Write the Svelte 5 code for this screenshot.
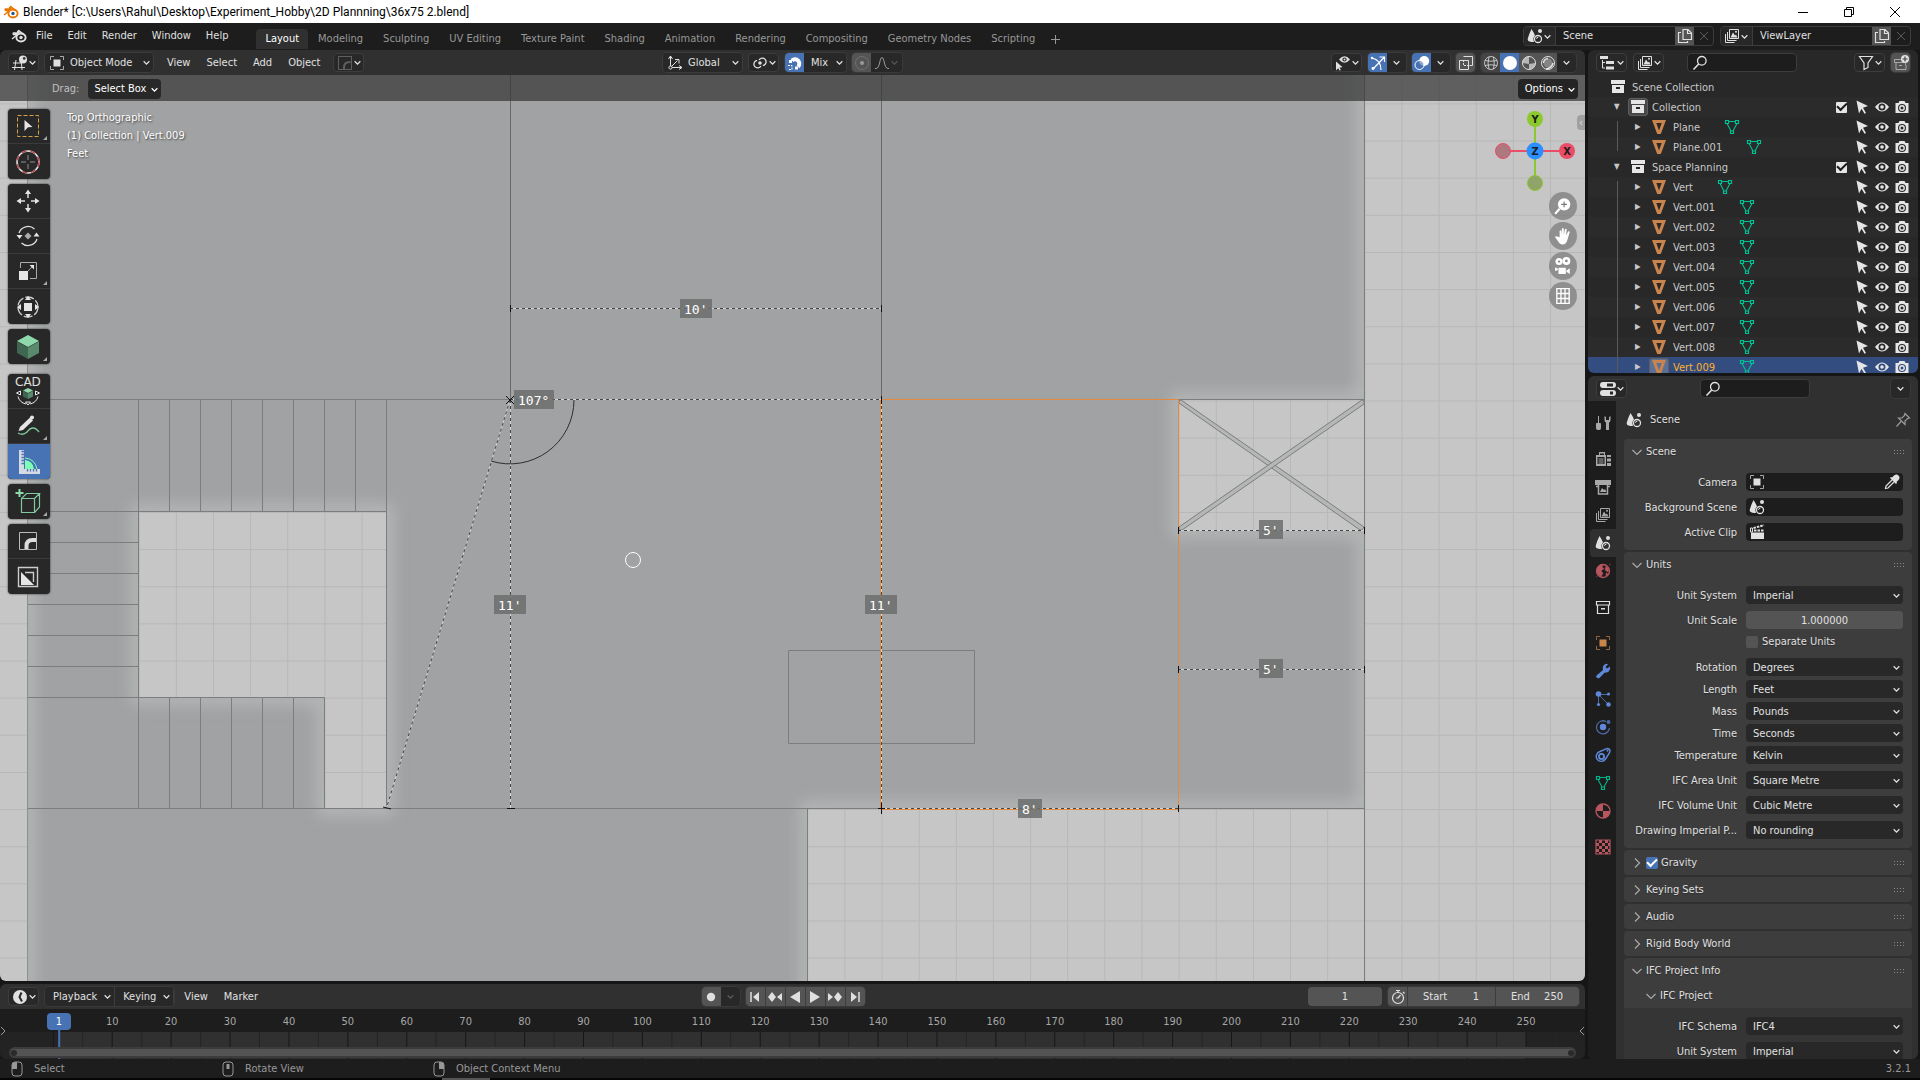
<script>
	const FOOT = 37.14;

	const icons = {
		blender:
			'<path d="M1 11 6.500 6.500H2.300V5H8L6.600 3.800 7.700 2.600 13 6.800" fill="none" stroke="currentColor" stroke-width="1.500" stroke-linejoin="round"/><ellipse cx="10" cy="9.500" rx="4.600" ry="4" fill="none" stroke="currentColor" stroke-width="1.900"/><circle cx="10" cy="9.500" r="1.700" fill="var(--eye, currentColor)"/>',
		chevron: '<path d="m4.500 6.500 3.500 3.500 3.500-3.500" fill="none" stroke="currentColor" stroke-width="1.600"/>',
		right: '<path d="m6 3.500 4.500 4.500-4.500 4.500" fill="none" stroke="currentColor" stroke-width="1.200"/>',
		down: '<path d="m3.500 6 4.500 4.500 4.500-4.500" fill="none" stroke="currentColor" stroke-width="1.200"/>',
		x: '<path d="m4 4 8 8m0-8-8 8" stroke="currentColor"/>',
		grid3d:
			'<path d="M1 8h8M0 12.500h13M4 5 2.500 15M9.500 8 10 15" stroke="currentColor" fill="none"/><circle cx="11" cy="4.500" r="4" fill="currentColor"/><circle cx="12.200" cy="3.400" r="1.300" fill="#333"/>',
		object:
			'<rect x="4.500" y="4.500" width="7" height="7" fill="currentColor"/><path d="M1.500 5V1.500H5M11 1.500h3.500V5M14.500 11v3.500H11M5 14.500H1.500V11" fill="none" stroke="currentColor" opacity=".7"/>',
		corner: '<path d="M1.500 1.500h13v13h-13z" fill="none" stroke="currentColor" opacity=".3"/><path d="M7 14V12q0-5 6.500-5" fill="none" stroke="currentColor" stroke-width="2" opacity=".3"/>',
		axes: '<path d="M3.500 1v11.500H15M3.500 12.500l7-7M1.500 4l2-3 2 3M12 10.500l3 2-3 2M8 4.500h4v4" fill="none" stroke="currentColor"/><circle cx="3.500" cy="12.500" r="1.600" fill="#282828" stroke="currentColor"/>',
		pivot:
			'<path d="M9 11A3.800 3.800 0 1 1 4.200 5.600h1M7 5a3.800 3.800 0 1 1 4.800 5.400h-1" fill="none" stroke="currentColor" stroke-width="1.300"/><circle cx="8" cy="8" r="1.800" fill="currentColor"/>',
		magnet:
			'<path d="M5 5.500a4.200 4.200 0 1 1 6 6.200" fill="none" stroke="currentColor" stroke-width="4"/><path d="M2 5h3v3H2zM8 11.500h3v3H8z" fill="currentColor"/><path d="M1 10.500h4v4H1" fill="none" stroke="currentColor" stroke-dasharray="2 1"/>',
		prop: '<circle cx="8" cy="8" r="6.500" fill="none" stroke="currentColor" opacity=".4"/><circle cx="8" cy="8" r="2" fill="currentColor"/>',
		falloff: '<path d="M1 13.500h1C6 13.500 5.500 2.500 8 2.500s2 11 6 11h1" fill="none" stroke="currentColor"/>',
		visibility:
			'<path d="M1 6.500v9l2.200-2.200 1.600 2.500 1-.7-1.200-2.500 3-.4z" fill="currentColor"/><path d="M4 4.500Q9.500-2 15 4.500 9.500 11 4 4.500z" fill="currentColor"/><circle cx="9.500" cy="4.500" r="2.100" fill="#282828"/><circle cx="9.500" cy="4.500" r="1" fill="currentColor"/>',
		gizmo: '<path d="M2 3q9 2 9 12M3.500 13.500 14 2.500M9.500 2H14.500V7" fill="none" stroke="currentColor" stroke-width="1.200"/><circle cx="3" cy="13.500" r="1.400" fill="currentColor"/><circle cx="2" cy="3" r="1.200" fill="currentColor"/>',
		overlay:
			'<circle cx="10.200" cy="6" r="5" fill="currentColor"/><circle cx="5.500" cy="10" r="4.500" fill="#4772b3" fill-opacity=".6" stroke="currentColor"/>',
		xray: '<path d="M5.500 1.500h9v9h-3M1.500 5.500h9v9h-9z" fill="none" stroke="currentColor"/><path d="M5.500 5v5.500H11" fill="none" stroke="currentColor" stroke-dasharray="2 1"/>',
		wire: '<circle cx="8" cy="8" r="6.500" fill="none" stroke="currentColor" opacity=".8"/><path d="M2 5.500q6 1.500 12 0M2 10.500q6-1.500 12 0M6 2q-2 6 0 12M10.500 2q1.500 6 0 12" fill="none" stroke="currentColor" opacity=".8"/>',
		solid: '<circle cx="8" cy="8" r="7" fill="currentColor"/>',
		matprev:
			'<circle cx="8" cy="8" r="6.500" fill="none" stroke="currentColor"/><path d="M8 1.500a6.500 6.500 0 0 0-6.500 6.500L8 9V1.500zM8 9l6.500-1A6.500 6.500 0 0 1 8 14.500z" fill="currentColor" opacity=".7"/>',
		rendered:
			'<circle cx="8" cy="8" r="6.500" fill="none" stroke="currentColor"/><circle cx="8" cy="8" r="4.600" fill="currentColor" opacity=".35"/><path d="M3.500 8a4.500 4.500 0 0 1 4.500-4.500M6 14q6-1 7-6" fill="none" stroke="currentColor" stroke-width="1.500"/>',
		search: '<circle cx="9.800" cy="5.800" r="4.300" fill="none" stroke="currentColor" stroke-width="1.300"/><path d="M6.700 9 1.500 14.500" stroke="currentColor" stroke-width="1.600"/>',
		filter: '<path d="M1.500 1.500h13L10 8v4.500L6 14.500V8z" fill="none" stroke="currentColor" stroke-width="1.200"/>',
		newcol:
			'<path d="M8 4.500H1.500v3h11V10M3 8v6.500h10V10M6 10.500h3" fill="none" stroke="currentColor" opacity=".6"/><circle cx="12" cy="4" r="4" fill="currentColor"/><path d="M12 1.500v5M9.500 4h5" stroke="#444" stroke-width="1.200"/>',
		outliner:
			'<path d="M0 1h8v3H0zM6 6h8v3H6zM6 11.500h8v3H6z" fill="currentColor"/><path d="M2.500 5v8H5M2.500 7.500H5" fill="none" stroke="currentColor"/>',
		layers:
			'<path d="M5.500 1.500h9v9h-9zM3.500 4v8.500h9M1.500 6v8.500h9" fill="none" stroke="currentColor"/><path d="M6.500 9.500 9 4.500l2 3 1-1 1.500 3z" fill="currentColor"/><circle cx="12" cy="3.800" r="1" fill="currentColor"/>',
		scene: '<path d="M4.500 1Q9.500 8.500 8.500 12.500q-1.500 2-4 1.500Q0 13.500.8 10.500 2 6 4.500 1z" fill="currentColor"/><circle cx="11" cy="11" r="4.600" fill="var(--hole, #282828)"/><circle cx="11" cy="11" r="3.500" fill="none" stroke="currentColor" stroke-width="1.300"/><path d="M9.500 10.800q0-1.500 1.800-1.500" fill="none" stroke="currentColor"/><circle cx="13" cy="3" r="2" fill="currentColor"/>',
		copy: '<path d="M6 1.500h5l3.500 3.500v6.500H6zM10.500 1.500V5.500h4M4 4.500H1.500v10h9V13" fill="none" stroke="currentColor" stroke-width="1.200"/>',
		collection:
			'<path d="M1 1h14v4H1zM2 6h12v8H2z" fill="currentColor"/><path d="M6 8h4v2H6z" fill="#282828"/>',
		archive: '<path d="M1.500 2.500h13v3.500h-13zM2.500 6v8.500h11V6" fill="none" stroke="currentColor" stroke-width="1.200"/><path d="M6 9h4v1.500H6z" fill="currentColor"/>',
		meshobj:
			'<path fill-rule="evenodd" d="M1 1h14L9.800 15H6.200zM5.300 4 8 11.500 10.700 4z" fill="currentColor"/>',
		meshdata:
			'<path d="M4.500 2.500h7M3 4.500l4 7.500M13 4.500 9 12" stroke="currentColor" stroke-width="1.100" fill="none"/><path d="M1.500 1.500h3v3h-3zM11.500 1.500h3v3h-3zM6.500 12h3v2.500h-3z" fill="none" stroke="currentColor" stroke-width="1.200"/>',
		cursor: '<path d="m2.500 1.500 11.500 5.500L9 8.700 12 14l-1.500.8-3-5-2.500 4.700z" fill="currentColor"/>',
		eye: '<path fill-rule="evenodd" d="M1 8Q8-1 15 8 8 17 1 8zM8 4.500a3.500 3.500 0 1 0 0 7 3.500 3.500 0 0 0 0-7z" fill="currentColor"/><circle cx="8" cy="8" r="1.800" fill="currentColor"/>',
		camera:
			'<path fill-rule="evenodd" d="M1.500 4h3l1-2h5l1 2h3v10h-13zM8 5a4 4 0 1 0 0 8 4 4 0 0 0 0-8z" fill="currentColor"/><circle cx="8" cy="9" r="2.200" fill="none" stroke="currentColor" stroke-width="1.400"/>',
		tool: '<path d="M3.500 1v7M1.500 8.500h4v5a1 1 0 0 1-1 1h-2a1 1 0 0 1-1-1z" stroke="currentColor" fill="currentColor"/><path d="M9.500 1v4q0 2 1.500 2.500V15h3V7.500Q15.500 7 15.500 5V1L14 2v3h-3V2z" fill="currentColor"/>',
		render:
			'<path fill-rule="evenodd" d="M1 4h3V1h6v3h1v11H1zM5 2.500V4h4V2.500zM2.500 6v7h7V6zM12 4h4v2h-4zM12 7.500h4v3h-4zM12 12h4v3h-4z" fill="currentColor"/><path d="M3.500 8h5M3.500 10h5M3.500 12h5" stroke="currentColor"/>',
		output:
			'<path d="M0 1h16v5H0z" fill="currentColor"/><path d="M3.500 6v9h9V6M1 7.500h2M13 7.500h2" fill="none" stroke="currentColor" stroke-width="1.500"/><path d="M5 13l2-4 2 2 1-1 1.500 3z" fill="currentColor"/>',
		world: '<circle cx="8" cy="8" r="6.500" fill="none" stroke="currentColor" stroke-width="1.300"/><path d="M2 5q3-4 6-3.500L7 4l2 1.500L6 8l2 2-2 4Q1 11 2 5zM11 3l3 3-1 3-3-2zM11 10l2 1-2 2zM14 2l2-1M1 14l1.500-1" fill="currentColor" stroke="currentColor" stroke-width=".5"/>',
		wrench: '<path d="M1.500 12.500 8 7Q7 3 10 1.200q1.500-.7 3 0L10.500 4l1.500 1.500L15 3.500q.8 3-1.200 5-2 1.500-4 1L4.500 15q-2 .8-3-.5-.8-1 0-2z" fill="currentColor"/>',
		particles:
			'<path d="M3.500 3.500h10M3.500 3.500v10M3.500 3.500l10 10" stroke="currentColor" opacity=".7"/><circle cx="3.500" cy="3" r="2.800" fill="currentColor"/><circle cx="13.500" cy="3" r="1.600" fill="currentColor"/><circle cx="3.500" cy="13.500" r="1.600" fill="currentColor"/><circle cx="13.500" cy="13.500" r="2.300" fill="currentColor"/>',
		physics:
			'<path d="M11 2.500A6.500 6.500 0 1 0 14.500 9" fill="none" stroke="currentColor" stroke-width="1.300" opacity=".7"/><circle cx="8" cy="8" r="3.200" fill="currentColor"/><circle cx="13.500" cy="3" r="2" fill="currentColor" opacity=".7"/>',
		constraint:
			'<path d="M12 1.500q3 0 3 2.500 0 1-1 2.500L10.500 12A5 5 0 1 1 5 4.500L11 1.800z" fill="none" stroke="currentColor" stroke-width="1.400"/><circle cx="6.500" cy="9.500" r="2.600" fill="none" stroke="currentColor" stroke-width="1.800"/><circle cx="12.500" cy="3.800" r="1" fill="currentColor"/>',
		material:
			'<circle cx="8" cy="8" r="7" fill="none" stroke="currentColor" stroke-width="1.300"/><path d="M8 1a7 7 0 0 0-7 7h7zM8 8h7a7 7 0 0 1-7 7z" fill="currentColor"/>',
		texture:
			'<path d="M1 1h14v14H1z" fill="none" stroke="currentColor" stroke-width="1.200"/><path d="M4 1h3v3H4zM10 1h3v3h-3zM1 4h3v3H1zM7 4h3v3H7zM13 4h2v3h-2zM4 7h3v3H4zM10 7h3v3h-3zM1 10h3v3H1zM7 10h3v3H7zM13 10h2v3h-2zM4 13h3v2H4zM10 13h3v2h-3z" fill="currentColor"/>',
		pin: '<path d="M10 1.500 14.500 6l-2 .5-2.500 2.500v3.500L3.500 6H7L9.500 3.500zM6 9.500l-4.500 5" fill="none" stroke="currentColor" stroke-width="1.200"/>',
		picker:
			'<path d="M10 1.500q2.500-2 4.500 0t0 4.500l-2 2 .5 1-1 1L6 4l1-1 1 .5z" fill="currentColor"/><path d="m8 6-6 6-.5 2.500L4 14l6-6" fill="none" stroke="currentColor" stroke-width="1.200"/>',
		clip: '<path d="M2 8.500h13V15H2z" fill="currentColor"/><path d="M1.500 4v4h2V4z" fill="none" stroke="currentColor"/><path d="M5 6.500h10M4.500 4 15 1.200" stroke="currentColor" stroke-width="2" stroke-dasharray="2.500 1" fill="none"/>',
		props: '<path d="M3 1h10a2.500 2.500 0 0 1 0 6H3a2.500 2.500 0 0 1 0-6zM3 9h10a2.500 2.500 0 0 1 0 6H3a2.500 2.500 0 0 1 0-6z" fill="currentColor"/><path d="M7 2.500h6v3H7zM10 10.500h3v3h-3z" fill="#282828"/>',
		clock: '<circle cx="8" cy="8" r="7" fill="currentColor"/><path d="M9.500 3.500 7.500 8l2.500 4.500" fill="none" stroke="#282828" stroke-width="2"/>',
		stopwatch:
			'<circle cx="8" cy="9" r="5.500" fill="none" stroke="currentColor" stroke-width="1.200"/><path d="M6 1.500h4M8 1.500V4M8 9l2.500-3M13 3l1.500 1.500M8 9H6" stroke="currentColor" stroke-width="1.200"/>',
		record: '<circle cx="8" cy="8" r="4.200" fill="currentColor"/>',
		first: '<path d="M4 3v10" stroke="currentColor" stroke-width="1.500"/><path d="M12 3v10L6 8z" fill="currentColor"/>',
		prevkey: '<path d="m1 8 4-5 4 5-4 5z" fill="currentColor"/><path d="M15 4v8l-5-4z" fill="currentColor"/>',
		back: '<path d="M13 2v12L3 8z" fill="currentColor"/>',
		play: '<path d="M3 2v12l10-6z" fill="currentColor"/>',
		nextkey: '<path d="m7 8 4-5 4 5-4 5z" fill="currentColor"/><path d="M1 4v8l5-4z" fill="currentColor"/>',
		last: '<path d="M12 3v10" stroke="currentColor" stroke-width="1.500"/><path d="M4 3v10l6-5z" fill="currentColor"/>',
		mouseleft: '<rect x="3" y="1" width="10" height="14" rx="3" fill="none" stroke="currentColor"/><path d="M3 4q0-3 5-3v7H3z" fill="currentColor"/>',
		mousemid: '<rect x="3" y="1" width="10" height="14" rx="3" fill="none" stroke="currentColor"/><path d="M6.500 3h3v5h-3z" fill="currentColor"/>',
		mouseright: '<rect x="3" y="1" width="10" height="14" rx="3" fill="none" stroke="currentColor"/><path d="M13 4q0-3-5-3v7h5z" fill="currentColor"/>',
		zoom: '<circle cx="9" cy="6.500" r="5.500" fill="currentColor"/><path d="M5 10.500 1 15" stroke="currentColor" stroke-width="2"/><path d="M9 4v5M6.500 6.500h5" stroke="#777"/>',
		hand: '<path d="M5 9V3.500q1-1.200 1.600 0L7 7V1.500q1-1.200 1.700 0V7l1-5q1-1 1.600.2L10.700 7.500l1.800-3.500q1.200-.6 1.500.5L12 11q-1 4.500-4.500 4.500Q5 15.500 3.500 12.500L1 9q.3-1.400 2-.5z" fill="currentColor"/>',
		movie: '<circle cx="4.500" cy="4" r="3.200" fill="currentColor"/><circle cx="11" cy="3.500" r="3.500" fill="currentColor"/><circle cx="4.500" cy="4" r="1" fill="#888"/><circle cx="11" cy="3.500" r="1.200" fill="#888"/><path d="M4 9.500h6.500V15H4zM1 9l2.500 1.500v1L1 12.500zM11 12l3-2v5l-3-2z" fill="currentColor"/>',
		lattice: '<path d="M2.500 1.500h11v13h-11zM6.200 1.500v13M9.800 1.500v13M2.500 5.800h11M2.500 10.200h11" fill="none" stroke="currentColor" stroke-width="1.200"/>'
	};

	// Toolbar icons are drawn on a 24px box
	const toolIcons = {
		select:
			'<rect x="1.500" y="1.500" width="21" height="21" fill="none" stroke="#d6a247" stroke-dasharray="4 2"/><path d="m8.500 6 8 7-4.500.3L8.500 17z" fill="#e6e6e6"/>',
		cursor3d:
			'<circle cx="12" cy="12" r="11" fill="none" stroke="#e6e6e6" stroke-width="1.500"/><circle cx="12" cy="12" r="11" fill="none" stroke="#b5484c" stroke-width="1.500" stroke-dasharray="5 4"/><path d="M12 5v5M12 14v5M5 12h5M14 12h5" stroke="#909090"/>',
		move: '<path d="M12 4v5M12 15v5M4 12h5M15 12h5" stroke="#ddd" stroke-width="1.500"/><path d="m12 .5 3 4.500H9zM12 23.500 9 19h6zM.5 12 5 9v6zM23.500 12 19 15V9z" fill="#e6e6e6"/>',
		rotate:
			'<path d="M3 9A9.500 9.500 0 0 1 18.500 5M21 15A9.500 9.500 0 0 1 5.500 19" fill="none" stroke="#ddd" stroke-width="1.300"/><path d="M.5 11h6l-3 4zM17.500 12.500h6l-3-4z" fill="#e6e6e6"/><path d="m12 8.500 3.500 3.500-3.500 3.500L8.500 12z" fill="#aaa"/>',
		scale:
			'<path d="M4.500 9V3.500h16v16H14M12 12l5-5" fill="none" stroke="#aaa"/><path d="M3 12h9v9H3z" fill="#e6e6e6"/><path d="M13.500 6h4.500v4.500z" fill="#e6e6e6"/>',
		transform:
			'<circle cx="12" cy="12" r="10" fill="none" stroke="#ccc" stroke-width="1.300" stroke-dasharray="9 2"/><path d="M8 8h8v8H8zM12 1l3 4H9zM12 23l-3-4h6zM1 12l4-3v6zM23 12l-4 3V9z" fill="#e6e6e6"/>',
		cube: '<path d="m12 0 11 6-11 6L1 6z" fill="#8fd8ac"/><path d="M1 6.500 12 12.500V24L1 18z" fill="#3f6650"/><path d="M23 6.500 12 12.500V24l11-6z" fill="#5a8a6c"/>',
		cadcube:
			'<path d="m12 6 5 2.500-5 2.500-5-2.500z" fill="#8fd8ac"/><path d="m7 9 5 2.500V17l-5-2.500z" fill="#3f6650"/><path d="m17 9-5 2.500V17l5-2.500z" fill="#5a8a6c"/><path d="M2 14.500q1.500 6 8 7.500M22 14.500q-1.500 6-8 7.500M4.500 9v4L.5 11zM19.500 9v4l4-2zM9.500 20h5L12 23z" fill="none" stroke="#e6e6e6"/>',
		annotate:
			'<path d="M2.500 17 4 13 14 3.500l3 3L7 16z" fill="#e6e6e6"/><circle cx="16" cy="3.500" r="2" fill="#e6e6e6"/><path d="M2 19q5 3 9-1 6-8 12 0" fill="none" stroke="#7fca9f" stroke-width="1.300"/>',
		measure:
			'<path d="M3 0h5v24H3z" fill="#d5dae2"/><path d="M3 19h21v5H3z" fill="#d5dae2"/><path d="M8 1.500H5.500M8 4.500H5.500M8 7.500H5.500M8 10.500H5.500M8 13.500H5.500M11.500 19v2.500M14.500 19v2.500M17.500 19v2.500M20.500 19v2.500" stroke="#4772b3" stroke-width="1.300"/><path d="M9 10q8 1 9 9H9z" fill="#7dffb4"/><path d="M9 8q10 1 12 11" fill="none" stroke="#7dffb4"/>',
		addcube:
			'<path d="M5.500 8.500h13v14h-13zM5.500 8.500l5-5h13l-5 5M23.500 3.500V17l-5 5.500" fill="none" stroke="#7fca9f" stroke-width="1.200"/><path d="M3.500-1v8M-.5 3h8" stroke="#8fd8ac" stroke-width="2"/>',
		bevel: '<path d="M3.500 3.500h17v17h-17z" fill="none" stroke="#bbb"/><path d="M10.500 20v-3q0-6 6-6H20" fill="none" stroke="#ddd" stroke-width="4"/>',
		inset: '<path d="M2.500 2.500h19v19h-19zM9 7.500h8.500V17" fill="none" stroke="#ccc" stroke-width="1.400"/><path d="M5 7v13h13z" fill="#e6e6e6"/>'
	};

	const menus = ['File', 'Edit', 'Render', 'Window', 'Help'];
	const workspaces = [
		'Layout', 'Modeling', 'Sculpting', 'UV Editing', 'Texture Paint', 'Shading', 'Animation',
		'Rendering', 'Compositing', 'Geometry Nodes', 'Scripting'
	];

	const toolGroups = [
		[{ icon: 'select', label: 'Select Box', more: true }, { icon: 'cursor3d', label: 'Cursor' }],
		[
			{ icon: 'move', label: 'Move' },
			{ icon: 'rotate', label: 'Rotate' },
			{ icon: 'scale', label: 'Scale', more: true },
			{ icon: 'transform', label: 'Transform' }
		],
		[{ icon: 'cube', label: 'BIM Tool', more: true }],
		[
			{ icon: 'cadcube', label: 'CAD Transform', cad: true },
			{ icon: 'annotate', label: 'Annotate', more: true },
			{ icon: 'measure', label: 'Measure' }
		],
		[{ icon: 'addcube', label: 'Add Cube', more: true }],
		[{ icon: 'bevel', label: 'Bevel' }, { icon: 'inset', label: 'Inset' }]
	];

	const outliner = [
		{ kind: 'root', name: 'Scene Collection' },
		{ kind: 'collection', name: 'Collection', boxed: true },
		{ kind: 'mesh', name: 'Plane' },
		{ kind: 'mesh', name: 'Plane.001' },
		{ kind: 'collection', name: 'Space Planning' },
		{ kind: 'mesh', name: 'Vert' },
		...[1, 2, 3, 4, 5, 6, 7, 8].map((n) => ({ kind: 'mesh', name: `Vert.00${n}` })),
		{ kind: 'mesh', name: 'Vert.009', active: true, boxed: true }
	];

	const propertyTabs = [
		[['tool', 'gray']],
		[['render', 'gray'], ['output', 'gray'], ['layers', 'gray'], ['scene', 'light'], ['world', 'red']],
		[['archive', 'light']],
		[
			['object', 'orange'], ['wrench', 'blue'], ['particles', 'blue'], ['physics', 'blue'],
			['constraint', 'blue'], ['meshdata', 'green'], ['material', 'red']
		],
		[['texture', 'red']]
	];

	const sceneFields = [
		{ label: 'Camera', icon: 'object', pick: true },
		{ label: 'Background Scene', icon: 'scene' },
		{ label: 'Active Clip', icon: 'clip' }
	];
	const lengthUnits = [
		['Rotation', 'Degrees'], ['Length', 'Feet'], ['Mass', 'Pounds'], ['Time', 'Seconds'],
		['Temperature', 'Kelvin']
	];
	const ifcUnits = [
		['IFC Area Unit', 'Square Metre'], ['IFC Volume Unit', 'Cubic Metre'],
		['Drawing Imperial P...', 'No rounding']
	];
	const ifcProject = [['IFC Schema', 'IFC4'], ['Unit System', 'Imperial']];

	const transport = ['first', 'prevkey', 'back', 'play', 'nextkey', 'last'];
	const frameX = (frame) => 53.3 + frame * 5.891;
	const majorFrames = Array.from({ length: 26 }, (_, i) => i * 10);
	const minorFrames = Array.from({ length: 27 }, (_, i) => i * 10 - 5);

	const dimensions = [
		{ text: "10'", x: 680, y: 299 },
		{ text: '107°', x: 514, y: 390 },
		{ text: "11'", x: 494, y: 595 },
		{ text: "11'", x: 865, y: 595 },
		{ text: "5'", x: 1259, y: 520 },
		{ text: "5'", x: 1259, y: 659 },
		{ text: "8'", x: 1018, y: 799 }
	];
	const rulers = [
		'M510 308.500H881', 'M510 399.500H881', 'M510.500 400V808', 'M510 400 386.500 808',
		'M881.500 400V808', 'M1178 530.500H1364', 'M1178 669.500H1364', 'M881 808.500H1178'
	];
	const slab =
		'M27.500-50V1400H807V808.500H1364.500V530.500H1178.500V399.500H1364.500V-50zM138.500 511.500H386.500V808.500H324.500V697.500H138.500z';

	let tool = $state('measure');
	let gravity = $state(true);
	let separate = $state(false);
</script>

{#snippet icon(name)}
	<svg class="icon" class:small={name === 'chevron'} viewBox="0 0 16 16" aria-hidden="true">{@html icons[name]}</svg>
{/snippet}

{#snippet drop(label, value, name)}
	<span class="drop">
		{#if name}{@render icon(name)}{/if}
		<select aria-label={label}><option>{value}</option></select>
		{@render icon('chevron')}
	</span>
{/snippet}

{#snippet iconDrop(label, name)}
	<button class="icon-drop" aria-label={label}>{@render icon(name)}{@render icon('chevron')}</button>
{/snippet}

{#snippet field(label, value)}
	<label class="field"><span>{label}</span>{@render drop(label, value)}</label>
{/snippet}

{#snippet dots()}
	<svg class="dots" viewBox="0 0 12 5" aria-hidden="true">
		<path d="M0 .5h12M0 3.500h12" stroke="#8a8a8a" stroke-dasharray="1 2" />
	</svg>
{/snippet}

<div class="app">
	<header class="titlebar">
		<span class="logo">{@render icon('blender')}</span>
		<span class="title">Blender* [C:\Users\Rahul\Desktop\Experiment_Hobby\2D Plannning\36x75 2.blend]</span>
		<div class="window-buttons">
			<button aria-label="Minimize"><svg viewBox="0 0 10 10"><path d="M0 5.500h10" /></svg></button>
			<button aria-label="Restore"><svg viewBox="0 0 10 10"><path d="M.5 2.500h7v7h-7zM2.500 2.500v-2h7v7h-2" /></svg></button>
			<button aria-label="Close"><svg viewBox="0 0 10 10"><path d="m0 0 10 10m0-10L0 10" /></svg></button>
		</div>
	</header>

	<nav class="topbar">
		<button class="app-menu" aria-label="Blender">{@render icon('blender')}</button>
		<div class="file-menus">
			{#each menus as menu}
				<button class="menu">{menu}</button>
			{/each}
		</div>
		<div class="workspaces">
			{#each workspaces as name, i}
				<button class:active={i === 0}>{name}</button>
			{/each}
			<button class="plus" aria-label="Add workspace">
				<svg viewBox="0 0 9 9"><path d="M4.500 0v9M0 4.500h9" stroke="currentColor" /></svg>
			</button>
		</div>
		<div class="datablock">
			{@render iconDrop('Browse scene', 'scene')}
			<input value="Scene" aria-label="Scene name" />
			<button class="raised" aria-label="New scene">{@render icon('copy')}</button>
			<button class="dim" aria-label="Delete scene">{@render icon('x')}</button>
		</div>
		<div class="datablock">
			{@render iconDrop('Browse view layer', 'layers')}
			<input value="ViewLayer" aria-label="View layer name" />
			<button class="raised" aria-label="New view layer">{@render icon('copy')}</button>
			<button class="dim" aria-label="Delete view layer">{@render icon('x')}</button>
		</div>
	</nav>

	<main class="screen">
		<div class="left">
			<section class="editor view3d">
				<div class="bar">
					{@render iconDrop('Editor type', 'grid3d')}
					<div class="mode">{@render drop('Mode', 'Object Mode', 'object')}</div>
					<div class="menus">
						<button class="menu">View</button>
						<button class="menu">Select</button>
						<button class="menu">Add</button>
						<button class="menu">Object</button>
					</div>
					{@render iconDrop('Corner', 'corner')}
					<span class="grow-left"></span>
					<div class="orientation">{@render drop('Orientation', 'Global', 'axes')}</div>
					{@render iconDrop('Pivot', 'pivot')}
					<div class="group">
						<button class="square on" aria-label="Snap">{@render icon('magnet')}</button>
						<div class="snap">{@render drop('Snap to', 'Mix')}</div>
					</div>
					<div class="group faded">
						<button class="square raised" aria-label="Proportional">{@render icon('prop')}</button>
						{@render iconDrop('Falloff', 'falloff')}
					</div>
					<span class="grow-right"></span>
					{@render iconDrop('Visibility', 'visibility')}
					<div class="group">
						<button class="square on" aria-label="Gizmos">{@render icon('gizmo')}</button>
						<button class="square" aria-label="Gizmo options">{@render icon('chevron')}</button>
					</div>
					<div class="group">
						<button class="square on" aria-label="Overlays">{@render icon('overlay')}</button>
						<button class="square" aria-label="Overlay options">{@render icon('chevron')}</button>
					</div>
					<div class="group"><button class="square raised" aria-label="X-ray">{@render icon('xray')}</button></div>
					<div class="group">
						<button class="square shade" aria-label="Wireframe">{@render icon('wire')}</button>
						<button class="square on" aria-label="Solid">{@render icon('solid')}</button>
						<button class="square raised" aria-label="Material preview">{@render icon('matprev')}</button>
						<button class="square raised" aria-label="Rendered">{@render icon('rendered')}</button>
						<button class="square" aria-label="Shading options">{@render icon('chevron')}</button>
					</div>
				</div>

				<div class="region">
					<svg class="drawing" aria-label="Floor plan">
						<defs>
							<pattern id="feet" x="27.300" y="28.400" width={FOOT} height={FOOT} patternUnits="userSpaceOnUse">
								<path d="M0 .5h38M.5 0v38" stroke="#b7b7b7" fill="none" />
							</pattern>
							<clipPath id="slab"><path d={slab} clip-rule="evenodd" /></clipPath>
							<filter id="soft" filterUnits="userSpaceOnUse" x="-50" y="0" width="1600" height="1400">
								<feGaussianBlur stdDeviation="8" />
							</filter>
						</defs>
						<rect width="100%" height="100%" fill="#c6c6c6" />
						<rect width="100%" height="100%" fill="url(#feet)" />
						<g transform="translate(0 -75)">
							<path d={slab} fill="#a1a2a3" fill-rule="evenodd" />
							<g clip-path="url(#slab)">
								<path d={slab} fill="none" stroke="#c0c2c2" stroke-width="13" filter="url(#soft)" opacity=".75" />
							</g>
							<g class="walls">
								<path d="M27.500 399.500H510M1178 399.500H1364.500M27 808.500H1364.500M1364.500 75V1400M807.500 808V1400" />
								<path d="M386.500 400V808M138.500 400V697.500M138.500 697V808M27 511.500H386.500M27 697.500H324.500V808" />
								{#each [1, 2, 3, 4, 5, 6, 7] as n}
									<path d="M{138.5 + n * 31} 400V511" />
								{/each}
								{#each [1, 2, 3, 4, 5] as n}
									<path d="M27 {511.5 + n * 31}H138M{138.5 + n * 31} 697V808" />
								{/each}
								<path d="M788.500 650.500h186v93h-186z" />
								<path d="M510.500 75V400M881.500 75V400" stroke="#67696a" />
							</g>
							<path d="M27.500 75V1400" stroke="#8b9480" />
							<g fill="#b4b7b6" stroke="#7b7e7d">
								<path d="m1181 400 183 127-2 3h-2L1179 403v-2z" />
								<path d="m1362 400-183 127v3h3L1364 404v-3z" />
							</g>
							<path d="M880.500 400V808.500M881 399.500H1178.500V809.500H881" fill="none" stroke="#e58a3c" />
							{#each rulers as d}
								<path {d} stroke="#d4d4d4" />
								<path {d} stroke="#151515" stroke-opacity=".75" stroke-dasharray="3 3" />
							{/each}
							<path
								d="M510.500 305v7M881.500 305v7M881.500 396v8M881.500 803v11M878 808.500h7M1178.500 527v7M1364.500 527v7M1178.500 666v7M1364.500 666v7M1178.500 805v7M507 808.500h8M383 807l8 2M506 396l8 8M514 396l-8 8"
								stroke="#111"
							/>
							<path d="M574 400a64 64 0 0 1-83 61" fill="none" stroke="#2d2d2d" />
							<circle cx="633" cy="560" r="7.500" fill="none" stroke="#fff" />
							{#each dimensions as d}
								<rect x={d.x} y={d.y} width={d.text.length * 8 + 8} height="19" fill="#6c6e6f" fill-opacity=".85" />
								<text x={d.x + 4} y={d.y + 15}>{d.text}</text>
							{/each}
						</g>
					</svg>

					<div class="tool-header">
						<span>Drag:</span>
						<div class="drag">{@render drop('Drag', 'Select Box')}</div>
						<button class="options">Options {@render icon('chevron')}</button>
					</div>

					<div class="overlays">
						<div class="toolbar">
							{#each toolGroups as group}
								<div class="tools">
									{#each group as item}
										<button
											class:active={tool === item.icon}
											aria-label={item.label}
											onclick={() => (tool = item.icon)}
										>
											{#if item.cad}<span class="cad">CAD</span>{/if}
											<svg class="tool-icon" viewBox="0 0 24 24">{@html toolIcons[item.icon]}</svg>
											{#if item.more}<i></i>{/if}
										</button>
									{/each}
								</div>
							{/each}
						</div>
						<div class="view-info">
							<p>Top Orthographic</p>
							<p>(1) Collection | Vert.009</p>
							<p>Feet</p>
						</div>
						<div class="navigation">
							<svg class="axis" viewBox="0 0 84 84">
								<path d="M42 18v56" stroke="#8bc92c" stroke-width="2" />
								<path d="M10 42h64" stroke="#ea4d65" stroke-width="2" />
								<circle cx="10" cy="42" r="7.500" fill="#ad7880" stroke="#ea4d65" />
								<circle cx="42" cy="74" r="7.500" fill="#90a36b" stroke="#8bc92c" />
								<circle cx="42" cy="10" r="8" fill="#8bc92c" />
								<circle cx="74" cy="42" r="8" fill="#ea4d65" />
								<circle cx="42" cy="42" r="8.500" fill="#2c8fff" />
								<text x="42" y="14">Y</text>
								<text x="74" y="46">X</text>
								<text x="42" y="46">Z</text>
							</svg>
							{#each ['zoom', 'hand', 'movie', 'lattice'] as name}
								<button aria-label={name}>{@render icon(name)}</button>
							{/each}
						</div>
						<button class="sidebar-tab" aria-label="Sidebar">‹</button>
					</div>
				</div>
			</section>

			<section class="editor timeline">
				<div class="bar">
					{@render iconDrop('Editor type', 'clock')}
					<div class="group">
						<button class="text-drop">Playback {@render icon('chevron')}</button>
						<button class="text-drop">Keying {@render icon('chevron')}</button>
					</div>
					<div class="menus">
						<button class="menu">View</button>
						<button class="menu">Marker</button>
					</div>
					<span class="grow-before"></span>
					<div class="group">
						<button class="square raised" aria-label="Auto keying">{@render icon('record')}</button>
						<button class="square dim" aria-label="Keying options">{@render icon('chevron')}</button>
					</div>
					<div class="group transport">
						{#each transport as name}
							<button class="square raised" aria-label={name}>{@render icon(name)}</button>
						{/each}
					</div>
					<span class="grow-after"></span>
					<input class="frame" value="1" aria-label="Current frame" />
					<div class="group">
						<button class="square raised" aria-label="Preview range">{@render icon('stopwatch')}</button>
						<label class="range">Start <input value="1" /></label>
						<label class="range">End <input value="250" /></label>
					</div>
				</div>
				<svg class="ruler" aria-label="Frames">
					<rect y="23" width="100%" height="28" fill="#232323" />
					<rect x={frameX(1)} y="23" width={frameX(250) - frameX(1)} height="28" fill="#303030" />
					{#each minorFrames as f}
						<path d="M{frameX(f)} 23v28" stroke="#252525" />
					{/each}
					{#each majorFrames as f}
						<path d="M{frameX(f)} 23v28" stroke="#171717" />
						{#if f > 0}<text x={frameX(f)} y="16">{f}</text>{/if}
					{/each}
					<path d="M{frameX(1)} 18v33" stroke="#4772b3" stroke-width="2" />
					<rect x="47" y="4" width="24" height="17" rx="4" fill="#4772b3" />
					<text x="59" y="16" class="current">1</text>
					<path d="m1 18 4 4-4 4" fill="none" stroke="#999" />
					<svg x="100%" y="0" overflow="visible">
						<path d="m-1 18-4 4 4 4" fill="none" stroke="#999" />
					</svg>
				</svg>
				<div class="scroller"></div>
			</section>
		</div>

		<div class="right">
			<section class="editor outliner">
				<div class="bar">
					{@render iconDrop('Editor type', 'outliner')}
					{@render iconDrop('Display mode', 'layers')}
					<label class="search">{@render icon('search')}<input aria-label="Filter outliner" /></label>
					{@render iconDrop('Filter', 'filter')}
					<div class="group"><button class="square raised" aria-label="New collection">{@render icon('newcol')}</button></div>
				</div>
				<ul class="tree">
					{#each outliner as row}
						<li class={row.kind} class:active={row.active}>
							{#if row.kind === 'collection'}<span class="fold">▼</span>{/if}
							{#if row.kind === 'mesh'}<span class="fold">▶</span>{/if}
							<span class="kind" class:boxed={row.boxed}>
								{@render icon(row.kind === 'mesh' ? 'meshobj' : 'collection')}
							</span>
							<span class="name">{row.name}</span>
							{#if row.kind === 'mesh'}<span class="data">{@render icon('meshdata')}</span>{/if}
							{#if row.kind !== 'root'}
								<span class="toggles">
									{#if row.kind === 'collection'}
										<input type="checkbox" checked aria-label="Exclude {row.name}" />
									{/if}
									<button aria-label="Selectable">{@render icon('cursor')}</button>
									<button aria-label="Hide">{@render icon('eye')}</button>
									<button aria-label="Disable in renders">{@render icon('camera')}</button>
								</span>
							{/if}
						</li>
					{/each}
				</ul>
			</section>

			<section class="editor properties">
				<div class="bar">
					{@render iconDrop('Editor type', 'props')}
					<label class="search">{@render icon('search')}<input aria-label="Search properties" /></label>
					<div class="group"><button class="square" aria-label="Options">{@render icon('chevron')}</button></div>
				</div>
				<div class="props-body">
					<div class="tabs">
						{#each propertyTabs as group}
							<div class="tab-group">
								{#each group as [name, tint]}
									<button class={tint} class:active={name === 'scene'} aria-label={name}>{@render icon(name)}</button>
								{/each}
							</div>
						{/each}
					</div>
					<div class="panels">
						<div class="crumb">
							{@render icon('scene')}<span>Scene</span>
							<button aria-label="Pin">{@render icon('pin')}</button>
						</div>

						<div class="panel">
							<h3>{@render icon('down')}Scene{@render dots()}</h3>
							<div class="fields">
								{#each sceneFields as f}
									<label class="field">
										<span>{f.label}</span>
										<span class="pointer">
											{@render icon(f.icon)}<input />
											{#if f.pick}{@render icon('picker')}{/if}
										</span>
									</label>
								{/each}
							</div>
						</div>

						<div class="panel">
							<h3>{@render icon('down')}Units{@render dots()}</h3>
							<div class="fields">
								{@render field('Unit System', 'Imperial')}
								<label class="field"><span>Unit Scale</span><input class="number" value="1.000000" /></label>
								<label class="separate"><input type="checkbox" bind:checked={separate} />Separate Units</label>
								<div class="column">
									{#each lengthUnits as [label, value]}
										{@render field(label, value)}
									{/each}
								</div>
								{#each ifcUnits as [label, value]}
									{@render field(label, value)}
								{/each}
							</div>
						</div>

						<div class="panel">
							<h3>
								{@render icon('right')}
								<label><input type="checkbox" bind:checked={gravity} />Gravity</label>
								{@render dots()}
							</h3>
						</div>
						{#each ['Keying Sets', 'Audio', 'Rigid Body World'] as name}
							<div class="panel"><h3>{@render icon('right')}{name}{@render dots()}</h3></div>
						{/each}

						<div class="panel">
							<h3>{@render icon('down')}IFC Project Info{@render dots()}</h3>
							<h4>{@render icon('down')}IFC Project</h4>
							<div class="fields sub">
								{#each ifcProject as [label, value]}
									{@render field(label, value)}
								{/each}
							</div>
						</div>
					</div>
				</div>
			</section>
		</div>
	</main>

	<footer class="status">
		<span>{@render icon('mouseleft')}Select</span>
		<span>{@render icon('mousemid')}Rotate View</span>
		<span>{@render icon('mouseright')}Object Context Menu</span>
		<span class="version">3.2.1</span>
	</footer>
	<div class="taskbar"><span></span></div>
</div>

<style>
	:global(body) {
		background: #161616;
	}
	* {
		box-sizing: border-box;
	}
	.app {
		display: flex;
		flex-direction: column;
		height: 100vh;
		overflow: hidden;
		font: 11px/16px 'DejaVu Sans Condensed', 'DejaVu Sans', sans-serif;
		color: #e0e0e0;
	}
	button,
	input,
	select {
		margin: 0;
		padding: 0;
		border: 0;
		background: none;
		color: inherit;
		font: inherit;
		outline: none;
	}
	button {
		display: flex;
		align-items: center;
		justify-content: center;
		white-space: nowrap;
	}
	select {
		appearance: none;
		flex: 1;
		min-width: 0;
		height: 100%;
	}
	input {
		min-width: 0;
	}
	input[type='checkbox'] {
		appearance: none;
		flex: none;
		display: grid;
		place-items: center;
		width: 12px;
		height: 12px;
		border-radius: 2px;
		background: #545454;
	}
	input[type='checkbox']:checked {
		background: #4772b3;
	}
	input[type='checkbox']:checked::before {
		content: '';
		width: 8px;
		height: 4px;
		border: solid #fff;
		border-width: 0 0 2px 2px;
		transform: rotate(-45deg) translate(1px, -1px);
	}
	.icon {
		flex: none;
		width: 16px;
		height: 16px;
	}
	.small {
		width: 13px;
		height: 13px;
	}

	/* Window title and top bar */
	.titlebar {
		display: flex;
		align-items: center;
		flex: none;
		height: 23px;
		padding: 0 2px 0 3px;
		background: #fff;
		color: #000;
		font: 12px/22px Roboto, sans-serif;
	}
	.logo {
		display: flex;
		width: 20px;
		color: #ea7600;
		--eye: #265787;
	}
	.window-buttons {
		display: flex;
		margin-left: auto;
	}
	.window-buttons button {
		width: 46px;
		height: 22px;
	}
	.window-buttons svg {
		width: 10px;
		height: 10px;
		fill: none;
		stroke: #000;
	}
	.topbar {
		display: flex;
		align-items: center;
		flex: none;
		height: 27px;
		padding: 0 9px 1px;
		background: #1d1d1d;
	}
	.app-menu {
		width: 20px;
	}
	.file-menus {
		display: flex;
		gap: 1px;
	}
	.menu {
		height: 20px;
		padding: 0 7px;
	}
	.workspaces {
		display: flex;
		align-self: flex-end;
		flex: 1;
		margin-left: 21px;
		color: #989898;
	}
	.workspaces button {
		height: 20px;
		padding: 0 10px;
		border-radius: 4px 4px 0 0;
	}
	.workspaces .active {
		padding: 0 9px;
		background: #303030;
		color: #fff;
	}
	.workspaces .plus {
		padding: 0 6px;
	}
	.plus svg {
		width: 9px;
		height: 9px;
	}
	.datablock {
		display: flex;
		height: 20px;
		margin-left: 6px;
		overflow: hidden;
		border: 1px solid #3d3d3d;
		border-radius: 4px;
	}
	.datablock .icon-drop {
		border: 0;
		border-radius: 0;
		height: 18px;
	}
	.datablock input {
		width: 120px;
		padding-left: 7px;
		border-left: 1px solid #3d3d3d;
	}
	.datablock > button {
		width: 19px;
	}
	.datablock > .icon-drop {
		width: 31px;
	}

	/* Shared editor chrome */
	.screen {
		display: flex;
		flex: 1;
		gap: 3px;
		min-height: 0;
		padding-right: 2px;
	}
	.left,
	.right {
		display: flex;
		flex-direction: column;
		gap: 3px;
		min-width: 0;
	}
	.left {
		flex: 1;
	}
	.right {
		width: 330px;
	}
	.editor {
		display: flex;
		flex-direction: column;
		overflow: hidden;
		border-radius: 6px;
		background: #303030;
	}
	.bar {
		display: flex;
		align-items: center;
		flex: none;
		gap: 6px;
		height: 25px;
		padding: 0 8px;
	}
	.icon-drop {
		flex: none;
		justify-content: flex-start;
		width: 31px;
		height: 19px;
		padding-left: 3px;
		border: 1px solid #3d3d3d;
		border-radius: 4px;
		background: #282828;
	}
	.icon-drop .small {
		margin-left: -2px;
	}
	.drop {
		display: flex;
		align-items: center;
		width: 100%;
		height: 100%;
		padding-left: 7px;
		border-radius: 4px;
		background: #282828;
	}
	.group {
		display: flex;
		height: 19px;
		overflow: hidden;
		border-radius: 4px;
		background: #282828;
		box-shadow: 0 0 0 1px #3a3a3a;
	}
	.square {
		width: 19px;
		height: 19px;
	}
	.raised {
		background: #545454;
	}
	.shade {
		background: #444;
	}
	.on {
		background: #4772b3;
		color: #fff;
	}
	.dim {
		color: #5a5a5a;
	}
	.faded {
		color: #9a9a9a;
	}
	.menus {
		display: flex;
		gap: 2px;
	}

	/* 3D viewport */
	.view3d {
		flex: 1;
		min-height: 0;
	}
	.view3d .bar {
		padding-right: 9px;
	}
	.view3d .menus {
		padding-left: 1px;
	}
	.mode,
	.orientation {
		height: 19px;
		border-radius: 4px;
		box-shadow: 0 0 0 1px #3d3d3d;
	}
	.mode {
		width: 108px;
	}
	.mode .drop,
	.orientation .drop {
		gap: 5px;
		padding-left: 4px;
	}
	.orientation {
		width: 79px;
	}
	.snap {
		width: 42px;
	}
	.faded .icon-drop {
		border: 0;
	}
	.faded .small {
		opacity: 0.4;
	}
	.grow-left {
		flex: 11;
	}
	.grow-right {
		flex: 16;
	}
	.region {
		position: relative;
		display: flex;
		flex-direction: column;
		flex: 1;
		min-height: 0;
	}
	.drawing {
		position: absolute;
		inset: 0;
		width: 100%;
		height: 100%;
	}
	.drawing text {
		fill: #fff;
		font: 13px 'DejaVu Sans Mono', monospace;
	}
	.walls {
		fill: none;
		stroke: #7c7e7e;
	}
	.tool-header {
		position: relative;
		display: flex;
		align-items: center;
		flex: none;
		height: 26px;
		padding: 2px 7px 0 52px;
		background: rgba(51, 51, 51, 0.7);
		color: #c0c0c0;
	}
	.drag {
		width: 73px;
		height: 20px;
		margin-left: 9px;
		color: #fff;
	}
	.drag .drop {
		padding-left: 6px;
	}
	.options {
		height: 20px;
		margin-left: auto;
		padding-left: 7px;
		gap: 2px;
		border-radius: 4px;
		background: #242424;
		color: #fff;
	}
	.overlays {
		position: relative;
		display: flex;
		flex: 1;
		min-height: 0;
		padding: 8px 0 0 8px;
	}
	.toolbar {
		display: flex;
		flex-direction: column;
		gap: 5px;
		width: 42px;
	}
	.tools {
		overflow: hidden;
		border-radius: 4px;
		background: #282828;
		box-shadow: 0 0 2px #222;
	}
	.tools:nth-child(4) {
		margin-top: 5px;
	}
	.tools button {
		position: relative;
		width: 42px;
		height: 35px;
		padding-right: 3px;
		border-bottom: 1px solid #3a3a3a;
	}
	.tools button:last-child {
		border-bottom: 0;
	}
	.tools .active {
		background: #4772b3;
	}
	.tool-icon {
		width: 24px;
		height: 24px;
		overflow: visible;
	}
	.cad {
		position: absolute;
		top: 0;
		left: 7px;
		font: 12px/16px 'DejaVu Sans', sans-serif;
	}
	.cad + .tool-icon {
		margin-top: 6px;
	}
	.tools i {
		position: absolute;
		right: 3px;
		bottom: 3px;
		border: 2px solid;
		border-color: transparent #aaa #aaa transparent;
	}
	.view-info {
		margin-left: 17px;
		color: #fff;
		line-height: 18px;
		text-shadow: 1px 1px 2px rgba(0, 0, 0, 0.6);
	}
	.view-info p {
		margin: 0;
	}
	.navigation {
		display: flex;
		flex-direction: column;
		align-items: flex-end;
		gap: 2px;
		margin-left: auto;
		padding-right: 8px;
	}
	.axis {
		width: 84px;
		height: 84px;
		margin-bottom: -3px;
	}
	.axis text {
		fill: #1d1d1d;
		font-size: 11px;
		font-weight: bold;
		text-anchor: middle;
	}
	.navigation button {
		width: 28px;
		height: 28px;
		border-radius: 50%;
		background: rgba(120, 120, 120, 0.7);
		color: #fff;
	}
	.navigation .icon {
		width: 18px;
		height: 18px;
	}
	.sidebar-tab {
		position: absolute;
		top: 14px;
		right: 0;
		width: 8px;
		height: 15px;
		border-radius: 4px 0 0 4px;
		background: #a0a0a0;
	}

	/* Timeline */
	.timeline {
		position: relative;
		flex: none;
		background: #1d1d1d;
	}
	.timeline .bar {
		padding-right: 6px;
		background: #303030;
	}
	.timeline .menus {
		margin-left: -3px;
	}
	.grow-before {
		flex: 70;
	}
	.grow-after {
		flex: 71;
	}
	.text-drop {
		height: 19px;
		padding-left: 8px;
		gap: 4px;
		border-right: 1px solid #3d3d3d;
	}
	.transport {
		gap: 1px;
	}
	.frame {
		width: 74px;
		height: 19px;
		border-radius: 4px;
		background: #545454;
		text-align: center;
	}
	.transport,
	.timeline .group:has(.range) {
		background: #3d3d3d;
	}
	.range {
		display: flex;
		align-items: center;
		justify-content: space-between;
		width: 87px;
		margin-left: 1px;
		padding: 0 16px 0 15px;
		background: #545454;
	}
	.range:last-child {
		width: 83px;
	}
	.range input {
		width: 24px;
		text-align: right;
	}
	.ruler {
		width: 100%;
		height: 50px;
	}
	.ruler text {
		fill: #a6a6a6;
		font-size: 11px;
		text-anchor: middle;
	}
	.ruler .current {
		fill: #fff;
	}
	.scroller {
		position: absolute;
		right: 9px;
		bottom: 1px;
		left: 9px;
		display: flex;
		align-items: center;
		justify-content: space-between;
		height: 11px;
		border: 2px solid #3c3c3c;
		border-radius: 6px;
		background: #545454;
	}
	.scroller::before,
	.scroller::after {
		content: '';
		width: 6px;
		height: 6px;
		border-radius: 50%;
		background: #2a2a2a;
	}

	/* Outliner */
	.outliner {
		flex: none;
		height: 323px;
		background: #282828;
	}
	.search {
		display: flex;
		align-items: center;
		width: 110px;
		height: 19px;
		margin: 0 auto;
		padding: 0 4px;
		border: 1px solid #3d3d3d;
		border-radius: 4px;
		background: #1d1d1d;
	}
	.search input {
		flex: 1;
	}
	.outliner .search {
		margin-left: 17px;
	}
	.tree {
		position: relative;
		margin: 0;
		padding: 2px 0 0;
		list-style: none;
		color: #c8c8c8;
	}
	.tree::before,
	.tree::after {
		content: '';
		position: absolute;
		left: 29px;
		border-left: 1px solid #5a5a5a;
	}
	.tree::before {
		top: 46px;
		height: 30px;
	}
	.tree::after {
		top: 106px;
		bottom: 0;
	}
	.tree li {
		display: flex;
		align-items: center;
		height: 20px;
		padding-right: 8px;
	}
	.tree li:nth-child(even) {
		background: #2b2b2b;
	}
	.tree .root {
		padding-left: 20px;
	}
	.tree .collection {
		padding-left: 23px;
	}
	.tree .mesh {
		padding-left: 44px;
	}
	.tree li.active {
		background: #334d80;
	}
	.active .name {
		color: #ffaf29;
	}
	.fold {
		width: 17px;
		font-size: 8px;
		text-indent: 3px;
	}
	.kind {
		display: grid;
		place-items: center;
		width: 20px;
		height: 18px;
		border-radius: 4px;
		color: #e6e6e6;
	}
	.mesh .kind {
		color: #c9854d;
	}
	.boxed {
		background: #484848;
		box-shadow: inset 0 0 0 1px #5e5e5e;
	}
	.active .boxed {
		background: #5d6f95;
	}
	.name {
		padding-top: 1px;
		margin-left: 4px;
	}
	.data {
		display: flex;
		margin-left: 24px;
		color: #00c193;
	}
	.toggles {
		display: flex;
		align-items: center;
		gap: 4px;
		margin-left: auto;
		color: #e6e6e6;
	}
	.toggles input[type='checkbox']:checked {
		width: 11px;
		height: 11px;
		margin-right: 3px;
		border-radius: 1px;
		background: #e6e6e6;
	}
	.toggles input[type='checkbox']:checked::before {
		border-color: #1d1d1d;
	}

	/* Properties */
	.properties {
		flex: 1;
		min-height: 0;
	}
	.properties .search {
		margin: 0 auto 0 67px;
	}
	.props-body {
		display: flex;
		flex: 1;
		min-height: 0;
	}
	.tabs {
		width: 28px;
		padding: 8px 0 0 2px;
		background: #1d1d1d;
	}
	.tab-group {
		margin-bottom: 8px;
	}
	.tabs button {
		width: 26px;
		height: 28px;
	}
	.tabs .active {
		border-radius: 4px 0 0 4px;
		background: #303030;
		--hole: #303030;
	}
	.gray {
		color: #a8a8a8;
	}
	.light {
		color: #e0e0e0;
	}
	.red {
		color: #b85660;
	}
	.orange {
		color: #c8854a;
	}
	.blue {
		color: #5f88d8;
	}
	.green {
		color: #00b386;
	}
	.panels {
		flex: 1;
		min-width: 0;
		padding: 0 6px 0 8px;
		text-shadow: 0 1px 1px rgba(0, 0, 0, 0.3);
	}
	.crumb {
		display: flex;
		align-items: center;
		gap: 8px;
		height: 38px;
		padding: 0 1px 1px 2px;
		--hole: #303030;
	}
	.crumb button {
		margin-left: auto;
		color: #999;
	}
	.panel {
		margin-bottom: 2px;
		border-radius: 4px;
		background: #3d3d3d;
		overflow: hidden;
	}
	h3,
	h4 {
		display: flex;
		align-items: center;
		gap: 1px;
		height: 25px;
		margin: 0;
		padding: 1px 6px 0 5px;
		font-size: 11px;
		font-weight: normal;
	}
	h4 {
		padding-left: 19px;
	}
	h3 .icon,
	h4 .icon {
		color: #aaa;
	}
	h3 label {
		display: flex;
		align-items: center;
		gap: 3px;
	}
	.dots {
		width: 12px;
		height: 5px;
		margin-left: auto;
	}
	.fields {
		display: flex;
		flex-direction: column;
		gap: 7px;
		padding: 9px;
	}
	.field {
		display: flex;
		align-items: center;
		gap: 9px;
		height: 18px;
	}
	.field > span:first-child {
		flex: 1;
		padding-top: 1px;
		text-align: right;
		white-space: nowrap;
	}
	.field select {
		padding-top: 1px;
	}
	.field > :global(:nth-child(2)) {
		flex: none;
		width: 157px;
		height: 18px;
	}
	.number {
		border-radius: 4px;
		background: #545454;
		text-align: center;
	}
	.pointer {
		display: flex;
		align-items: center;
		padding: 0 3px;
		border-radius: 4px;
		background: #1d1d1d;
		--hole: #1d1d1d;
	}
	.pointer input {
		flex: 1;
	}
	.separate {
		display: flex;
		align-items: center;
		gap: 4px;
		height: 18px;
		margin: -3px 0 0 113px;
	}
	.column {
		display: flex;
		flex-direction: column;
		gap: 4px;
	}
	.sub {
		background: #353535;
	}

	/* Status bar */
	.status {
		display: flex;
		align-items: center;
		flex: none;
		height: 19px;
		padding: 1px 9px 0;
		background: #1d1d1d;
		color: #989898;
	}
	.status span {
		display: flex;
		align-items: center;
		gap: 9px;
		width: 211px;
	}
	.status .version {
		width: auto;
		margin-left: auto;
	}
	.taskbar {
		flex: none;
		height: 2px;
		padding-left: 23%;
		background: #050505;
	}
	.taskbar span {
		display: block;
		width: 48px;
		height: 2px;
		background: #555;
	}
</style>
